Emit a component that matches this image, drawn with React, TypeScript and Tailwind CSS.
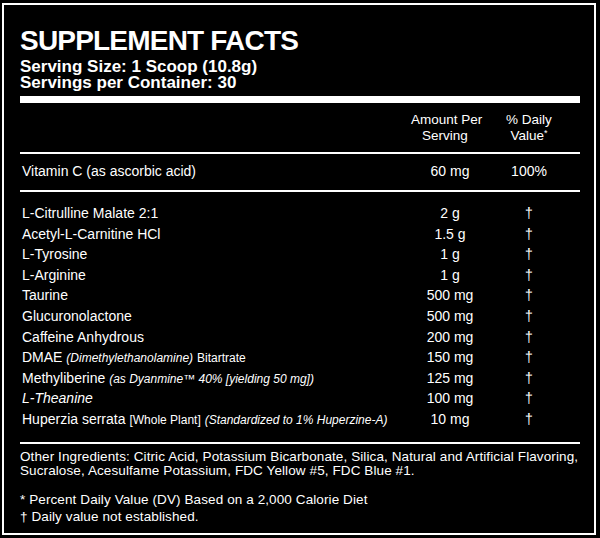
const rows: { name: React.ReactNode; amount: string }[] = [
  { name: "L-Citrulline Malate 2:1", amount: "2 g" },
  { name: "Acetyl-L-Carnitine HCl", amount: "1.5 g" },
  { name: "L-Tyrosine", amount: "1 g" },
  { name: "L-Arginine", amount: "1 g" },
  { name: "Taurine", amount: "500 mg" },
  { name: "Glucuronolactone", amount: "500 mg" },
  { name: "Caffeine Anhydrous", amount: "200 mg" },
  {
    name: (
      <>
        DMAE <span className="text-[12px] leading-none italic">(Dimethylethanolamine)</span>{" "}
        <span className="text-[12px] leading-none">Bitartrate</span>
      </>
    ),
    amount: "150 mg",
  },
  {
    name: (
      <>
        Methyliberine{" "}
        <span className="text-[12px] leading-none italic">(as Dyanmine™ 40% [yielding 50 mg])</span>
      </>
    ),
    amount: "125 mg",
  },
  { name: <span className="italic">L-Theanine</span>, amount: "100 mg" },
  {
    name: (
      <>
        Huperzia serrata <span className="text-[12px] leading-none">[Whole Plant]</span>{" "}
        <span className="text-[12px] leading-none italic">(Standardized to 1% Huperzine-A)</span>
      </>
    ),
    amount: "10 mg",
  },
];

export default function App() {
  return (
    <div className="w-[600px] h-[538px] bg-black pt-[3px] pl-[2px] pr-[4px] pb-[3px] text-white font-['Liberation_Sans',Arial,sans-serif]">
      <div className="h-full border-2 border-white pl-[16px] pr-[14px] pt-[22px]">
        <h1 className="text-[28px] leading-[28px] font-bold tracking-[-0.8px]">SUPPLEMENT FACTS</h1>
        <div className="mt-[4px] text-[17px] leading-[16px] font-bold">
          <p>Serving Size: 1 Scoop (10.8g)</p>
          <p>Servings per Container: 30</p>
        </div>
        <div className="mt-[5px] h-[7px] bg-white" />

        <div className="mt-[9px] grid grid-cols-[1fr_78px_80px] pr-[11px] text-[13.5px] leading-[16px] text-center whitespace-nowrap">
          <div />
          <div className="pr-[10px]">
            Amount Per
            <br />
            Serving
          </div>
          <div>
            % Daily
            <br />
            Value<span className="relative -top-[4px] text-[9px]">*</span>
          </div>
        </div>
        <div className="mt-[7px] h-[2px] bg-white" />

        <div className="pt-[7px] pb-[9px] grid grid-cols-[1fr_78px_80px] pr-[11px] text-[14px] leading-[20px]">
          <div className="pl-[2px]">Vitamin C (as ascorbic acid)</div>
          <div className="text-center">60 mg</div>
          <div className="text-center">100%</div>
        </div>
        <div className="h-[2px] bg-white" />

        <div className="pt-[11px] text-[14px] leading-[20.6px]">
          {rows.map((r, i) => (
            <div key={i} className="h-[20.6px] grid grid-cols-[1fr_78px_80px] pr-[11px]">
              <div className="pl-[2px] whitespace-nowrap">{r.name}</div>
              <div className="text-center">{r.amount}</div>
              <div className="text-center">†</div>
            </div>
          ))}
        </div>
        <div className="mt-[12px] h-[2px] bg-white" />

        <div className="mt-[6px] text-[13.5px] leading-[14px] tracking-[0.1px]">
          <p>
            Other Ingredients: Citric Acid, Potassium Bicarbonate, Silica, Natural and Artificial Flavoring,
            Sucralose, Acesulfame Potassium, FDC Yellow #5, FDC Blue #1.
          </p>
          <p className="mt-[13px] leading-[17px]">* Percent Daily Value (DV) Based on a 2,000 Calorie Diet</p>
          <p className="leading-[17px]">† Daily value not established.</p>
        </div>
      </div>
    </div>
  );
}
